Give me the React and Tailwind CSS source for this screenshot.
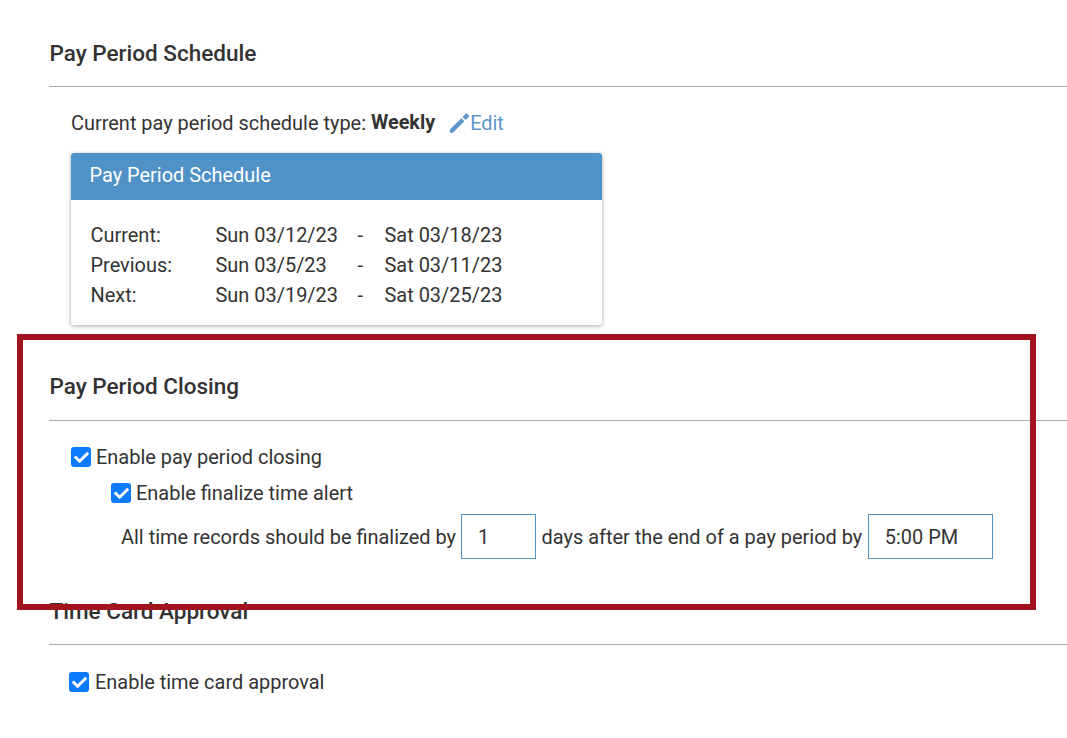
import { FaCheck } from "react-icons/fa";

// Blue filled checkbox with a label next to it
function CheckRow({ label, className, gap = "gap-[5px]" }) {
  return (
    <div className={`flex items-center ${gap} ${className}`}>
      <span className="w-5 h-5 rounded-[3px] bg-[#0a7bfb] flex items-center justify-center">
        <FaCheck className="w-[15px] h-[15px] text-white" />
      </span>
      <span>{label}</span>
    </div>
  );
}

function SectionTitle({ children, className }) {
  return (
    <div className={`border-b border-[#aaaaaa] ${className}`}>
      <h2 className="pl-[0.5px] text-[22.5px] font-medium leading-[28px] text-[#333333]">{children}</h2>
    </div>
  );
}

const periods = [
  { name: "Current:", start: "Sun 03/12/23", end: "Sat 03/18/23" },
  { name: "Previous:", start: "Sun 03/5/23", end: "Sat 03/11/23" },
  { name: "Next:", start: "Sun 03/19/23", end: "Sat 03/25/23" },
];

export default function App() {
  return (
    <div className="relative w-[1067px] h-[738px] overflow-hidden bg-white pl-[49px] text-[19.95px] leading-[30px] text-[#333333] font-['Roboto',sans-serif]">
      <SectionTitle className="pt-[39px] h-[87px]">Pay Period Schedule</SectionTitle>

      <div className="pl-[22px] pt-[21px] flex items-center h-[51px]">
        <span>Current pay period schedule type:</span>
        <span className="font-bold ml-[5px] text-[19.8px]">Weekly</span>
        <a className="flex items-center ml-[14px] text-[#5b97cc]">
          <svg viewBox="0 0 24 24" className="w-[21px] h-[22px] fill-[#5b97cc]">
            <path d="M1 19.5V23h3.5L17.5 10 14 6.5 1 19.5zM22.7 4.8c.4-.4.4-1 0-1.4l-2.1-2.1c-.4-.4-1-.4-1.4 0l-3.8 3.8 3.5 3.5 3.8-3.8z" />
          </svg>
          <span>Edit</span>
        </a>
      </div>

      <div className="ml-[22px] mt-[15px] w-[531px] h-[172px] rounded-[3px] bg-white shadow-[0_1px_4px_rgba(0,0,0,0.35)] overflow-hidden">
        <div className="h-[47px] bg-[#5091c6] pl-[18.5px] pb-1 flex items-center text-white">Pay Period Schedule</div>
        <div className="pl-[19.5px] pt-[20px]">
          {periods.map((p) => (
            <div key={p.name} className="flex">
              <span className="w-[125px]">{p.name}</span>
              <span className="w-[142px]">{p.start}</span>
              <span className="w-[27px]">-</span>
              <span>{p.end}</span>
            </div>
          ))}
        </div>
      </div>

      <SectionTitle className="mt-[47px] h-[49px]">Pay Period Closing</SectionTitle>

      <CheckRow label="Enable pay period closing" className="ml-[22px] mt-[21px]" />
      <CheckRow label="Enable finalize time alert" className="ml-[62px] mt-[6px]" />
      <div className="ml-[72px] mt-[6px] flex items-center">
        <span>All time records should be finalized by</span>
        <div className="ml-[5px] w-[75px] h-[45px] border border-[#5091c6] pl-4 flex items-center">1</div>
        <span className="ml-[5.5px]">days after the end of a pay period by</span>
        <div className="ml-[5.5px] w-[125px] h-[45px] border border-[#5091c6] pl-4 flex items-center">5:00 PM</div>
      </div>

      <SectionTitle className="mt-[38px] h-[48px]">Time Card Approval</SectionTitle>

      <CheckRow label="Enable time card approval" className="ml-5 mt-[22px]" gap="gap-[6px]" />

      {/* Red highlight drawn over the page */}
      <div className="absolute left-[17px] top-[334px] w-[1019px] h-[276px] border-[6px] border-[#a1141e]" />
    </div>
  );
}
